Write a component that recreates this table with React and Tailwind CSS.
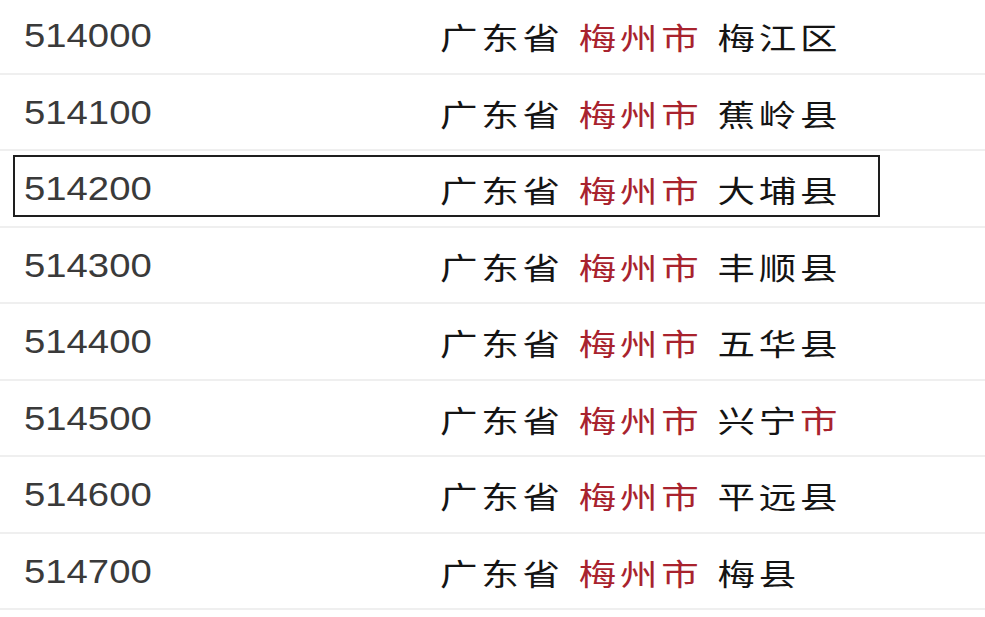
const rows = [
  ["514000", "梅江区"],
  ["514100", "蕉岭县"],
  ["514200", "大埔县"],
  ["514300", "丰顺县"],
  ["514400", "五华县"],
  ["514500", "兴宁市"],
  ["514600", "平远县"],
  ["514700", "梅县"],
];

function Content({ code, county }) {
  const xingning = county === "兴宁市";
  return (
    <div className="flex items-center w-full">
      <div className="w-[416px] shrink-0">
        <span className="inline-block origin-left scale-x-[1.16] font-['Liberation_Sans',Arial,sans-serif] text-[33px] leading-none text-[#3a3a3a]">
          {code}
        </span>
      </div>
      <span className="inline-block origin-left scale-x-[1.25] whitespace-nowrap font-['Noto_Sans_CJK_SC',sans-serif] text-[30px] leading-none tracking-[3px] text-[#141414]">
        <span>广东省</span>
        <span className="ml-[12px] text-[#a8232e]">梅州市</span>
        <span className="ml-[12px]">
          {xingning ? (
            <>
              兴宁<span className="text-[#a8232e]">市</span>
            </>
          ) : (
            county
          )}
        </span>
      </span>
    </div>
  );
}

export default function App() {
  return (
    <div className="w-[985px] h-[617px] bg-white overflow-hidden">
      <div className="-mt-[2px] flex flex-col">
        {rows.map(([code, county], i) =>
          i === 2 ? (
            <div
              key={code}
              className="h-[76.5px] border-b-2 border-[#efefef] pt-[4px]"
            >
              <div className="ml-[13px] w-[867px] h-[62px] border-2 border-[#1e1e1e] flex items-center pl-[9px] pt-[5px]">
                <Content code={code} county={county} />
              </div>
            </div>
          ) : (
            <div
              key={code}
              className="h-[76.5px] border-b-2 border-[#efefef] flex items-center pl-[24px] pt-[2px]"
            >
              <Content code={code} county={county} />
            </div>
          )
        )}
      </div>
    </div>
  );
}
